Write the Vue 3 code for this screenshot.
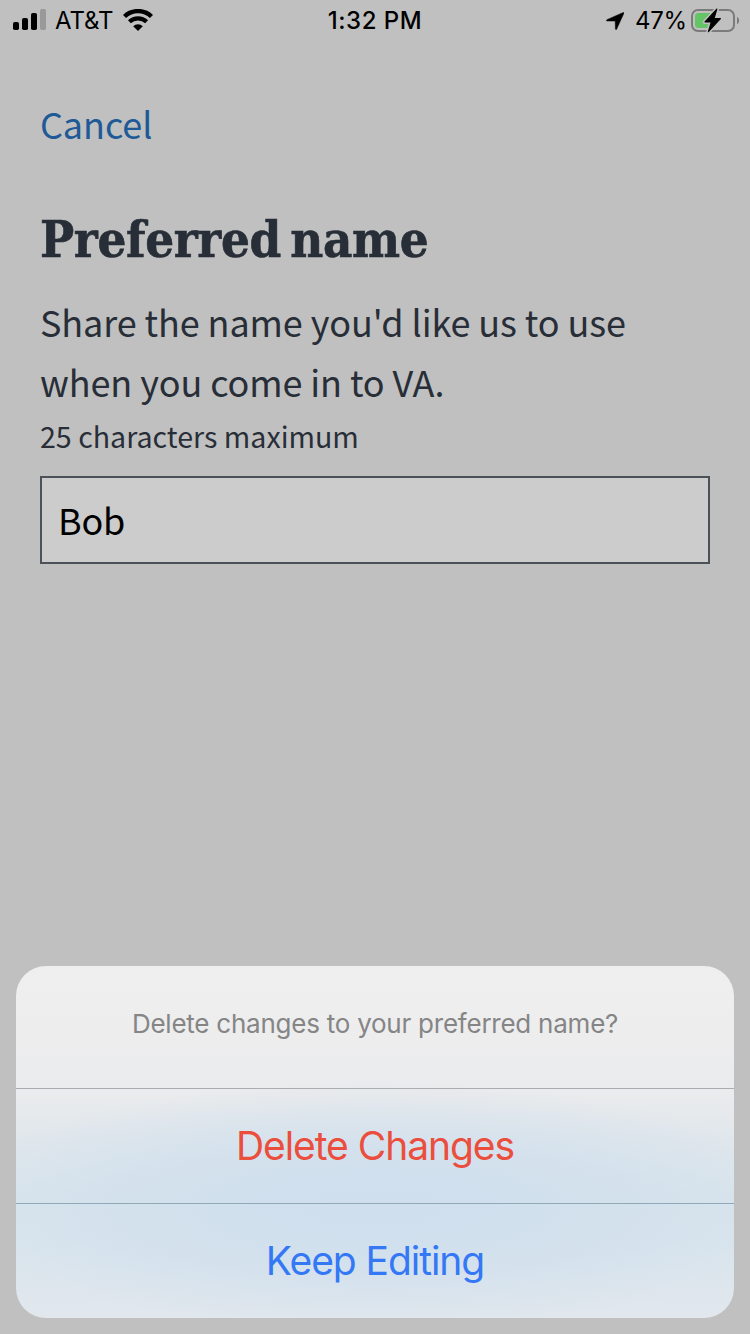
<script setup>
const actions = [
  { label: 'Delete Changes', kind: 'destructive' },
  { label: 'Keep Editing', kind: 'default' },
]
</script>

<template>
  <div class="screen">
    <header class="status">
      <div class="side left">
        <svg class="signal" width="34" height="22" viewBox="0 0 34 22">
          <rect x="0" y="13" width="6" height="8" rx="1.8" />
          <rect x="9" y="9" width="6" height="12" rx="1.8" />
          <rect x="18" y="4" width="6" height="17" rx="1.8" />
          <rect x="27" y="0" width="6" height="21" rx="1.8" fill="#999" />
        </svg>
        <span class="carrier">AT&amp;T</span>
        <svg class="wifi" width="30" height="22" viewBox="0 0 30 22">
          <path d="M1.5 7.5A19.5 19.5 0 0 1 28.5 7.5" fill="none" stroke="#000" stroke-width="4.4" />
          <path d="M6.4 12.8A12.4 12.4 0 0 1 23.6 12.8" fill="none" stroke="#000" stroke-width="4.2" />
          <path d="M10.2 17.3A6.8 6.8 0 0 1 19.8 17.3L15 22Z" />
        </svg>
      </div>
      <span class="time">1:32 PM</span>
      <div class="side right">
        <svg class="location" width="18" height="18" viewBox="0 0 18 18">
          <path d="M17.2.5Q18.2.2 17.8 1.4L10.6 17.2Q9.8 18.4 9.4 16.9L9.2 9H1.1Q-.4 8.6.9 7.7Z" stroke="#000" stroke-width=".5" />
        </svg>
        <span class="percent">47%</span>
        <svg class="battery" width="49" height="28" viewBox="0 0 49 28">
          <rect x="1" y="4" width="42" height="21" rx="6" fill="none" stroke="#7b7b7b" stroke-width="2" />
          <path d="M46 10.8Q48.2 12 48.2 14.5T46 18.2Z" fill="#7b7b7b" />
          <rect x="4" y="7" width="18" height="15" rx="3.4" fill="#64c466" />
          <path d="M25.8 3.2L14 15.9H20.4L17.4 25.6L29.4 12.6H23Z" fill="#000" stroke="#c0c0c0" stroke-width="4.4" stroke-linejoin="round" />
          <path d="M25.8 3.2L14 15.9H20.4L17.4 25.6L29.4 12.6H23Z" stroke="#000" stroke-width="1.2" stroke-linejoin="round" />
        </svg>
      </div>
    </header>

    <main class="content">
      <a class="cancel">Cancel</a>
      <h1>Preferred name</h1>
      <p class="lead">Share the name you'd like us to use<br>when you come in to VA.</p>
      <p class="hint">25 characters maximum</p>
      <div class="field">Bob</div>
    </main>

    <section class="sheet">
      <p class="prompt">Delete changes to your preferred name?</p>
      <button v-for="a in actions" :key="a.label" class="action" :class="a.kind">{{ a.label }}</button>
    </section>
  </div>
</template>

<style>
body { background: #c0c0c0; }
</style>

<style scoped>
.screen {
  width: 750px;
  height: 1334px;
  overflow: hidden;
  display: flex;
  flex-direction: column;
  background: #c0c0c0;
  font-family: "Noto Sans CJK SC", "Noto Sans", sans-serif;
}
svg { display: block; flex: none; }
.status {
  height: 40px;
  display: grid;
  grid-template-columns: 1fr auto 1fr;
  align-items: center;
  font: 24px/38px Inter, sans-serif;
  color: #000;
}
.side { display: flex; align-items: center; white-space: nowrap; height: 38px; }
.left { padding-left: 13px; }
.carrier { width: 58px; margin: 2px 10px 0 8px; letter-spacing: -0.1px; }
.time { margin-top: 2px; font-weight: 500; letter-spacing: 0.5px; }
.right { justify-content: flex-end; padding-right: 10px; }
.location { margin: 2px 11px 0 0; }
.percent { margin: 2px 4px 0 0; letter-spacing: -0.2px; }
.battery { margin-top: -1px; }
.content { padding: 53px 40px 0; display: flex; flex-direction: column; color: #282e37; }
.cancel { font-size: 36px; line-height: 60px; letter-spacing: -0.1px; color: #205a96; }
h1 {
  margin: 55px 0 0;
  font: bold 50.5px/64px "DejaVu Serif Condensed", "DejaVu Serif", serif;
  font-stretch: condensed;
  letter-spacing: -0.35px;
  word-spacing: -6px;
  white-space: nowrap;
  -webkit-text-stroke: 0.6px #282e37;
}
p { margin: 0; }
.lead { margin-top: 19px; font-size: 36px; line-height: 60px; letter-spacing: -0.1px; white-space: nowrap; }
.hint { font-size: 28.6px; line-height: 50px; }
.field {
  margin-top: 15px;
  height: 88px;
  box-sizing: border-box;
  border: 2px solid #4c5057;
  background: #ccc;
  padding-left: 16px;
  font-size: 36px;
  line-height: 82px;
  letter-spacing: -0.2px;
  color: #000;
}
.sheet {
  margin: auto 16px 16px;
  height: 352px;
  border-radius: 30px;
  overflow: hidden;
  display: flex;
  flex-direction: column;
  font-family: Inter, sans-serif;
  text-align: center;
  background:
    radial-gradient(ellipse 440px 122px at 50% 68%, #cfdfed 0, rgba(207,223,237,.95) 25%, rgba(207,223,237,.55) 62%, rgba(207,223,237,0) 100%),
    linear-gradient(#efefef 0, #ededee 22%, #e9ebed 37%, #e1e7ec 49%, #dae5ec 65%, #dae5ed 78%, #e1e7ed 100%);
}
.prompt { height: 122px; font-size: 26px; line-height: 115px; letter-spacing: -0.24px; color: #858586; }
.action {
  height: 115px;
  padding: 0;
  border: 0;
  border-top: 1px solid #8fa9b6;
  background: none;
  font: 39px/114px Inter, sans-serif;
  letter-spacing: -1.05px;
}
.destructive { border-color: #a9adb0; color: #eb4e3d; }
.default { color: #3478f6; }
</style>
